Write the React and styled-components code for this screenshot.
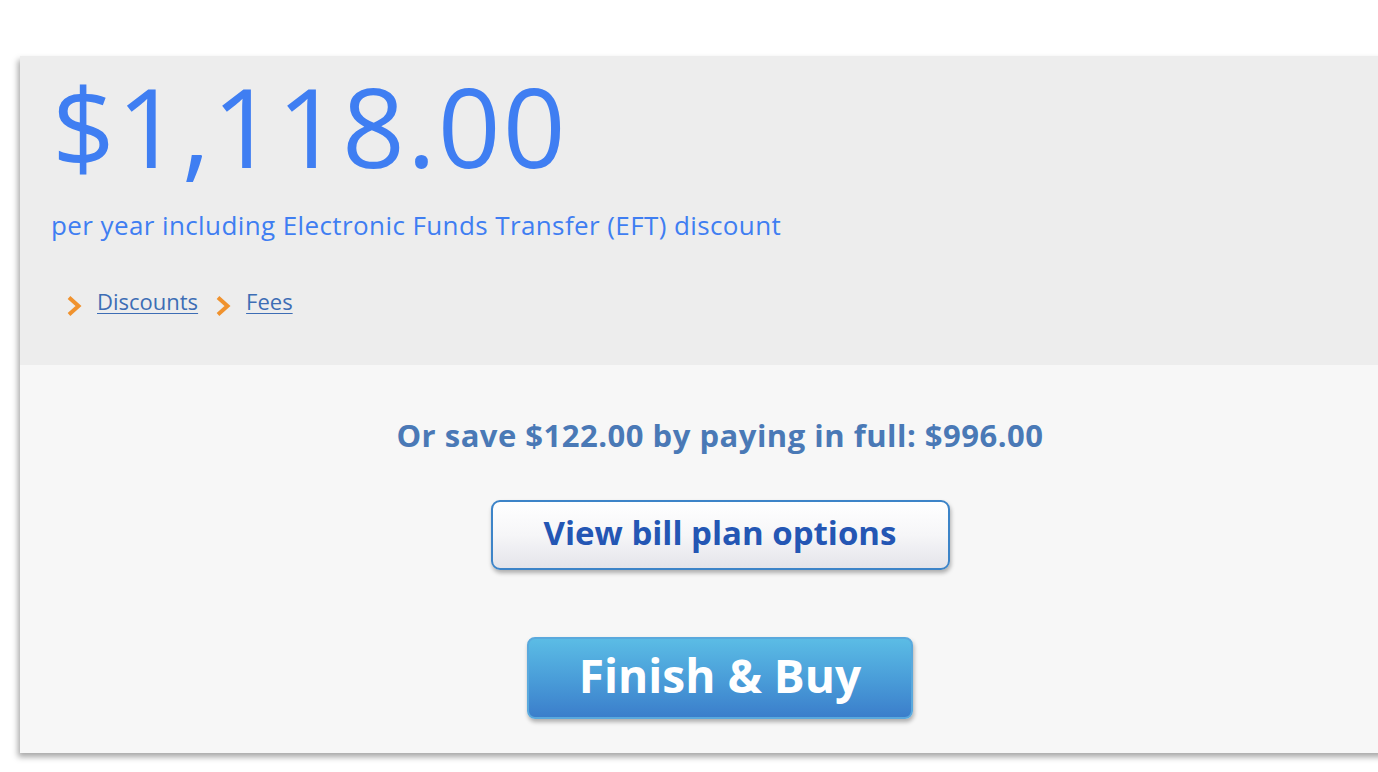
import React from 'react';
import styled, { createGlobalStyle } from 'styled-components';

const GlobalStyle = createGlobalStyle`
	body {
		margin: 0;
		background: #ffffff;
		font-family: "Open Sans", "Noto Sans", sans-serif;
		overflow: hidden;
	}
`;

const Page = styled.div`
	width: 1378px;
	height: 772px;
	padding: 56px 0 0 20px;
	box-sizing: border-box;
	overflow: hidden;
`;

const Card = styled.div`
	width: 1400px;
	box-shadow: -2px 4px 6px rgba(0, 0, 0, 0.35);
`;

const PriceArea = styled.div`
	background: #ededed;
	height: 309px;
	box-sizing: border-box;
	padding: 0 0 0 31px;
`;

const Price = styled.div`
	font-size: 110px;
	line-height: 1;
	color: #3f7ef2;
	letter-spacing: 2px;
	margin-left: 1px;
	padding-top: 14px;
`;

const PerYear = styled.div`
	font-size: 26px;
	letter-spacing: 0.4px;
	color: #3f7ef2;
	margin-top: 27px;
`;

const Links = styled.div`
	display: flex;
	align-items: center;
	gap: 18px;
	margin: 43px 0 0 16px;
`;

const LinkItem = styled.a`
	display: flex;
	align-items: center;
	gap: 15px;
	font-size: 22px;
	color: #3d6db5;
	text-decoration: underline;
	text-underline-offset: 3px;
	text-decoration-thickness: 1px;
`;

const Chevron = () => (
	<svg width="15" height="20" viewBox="0 0 15 20" style={{ marginTop: 10 }}>
		<path d="M2 1.5 L11.5 10 L2 18.5" fill="none" stroke="#f0922e" strokeWidth="4" />
	</svg>
);

const ActionArea = styled.div`
	background: #f7f7f7;
	height: 388px;
	display: flex;
	flex-direction: column;
	align-items: center;
	padding-top: 49px;
	box-sizing: border-box;
`;

const SaveLine = styled.div`
	font-size: 31px;
	letter-spacing: 0.5px;
	font-weight: 700;
	color: #4a79b6;
	line-height: 42px;
`;

const PlanButton = styled.button`
	margin-top: 44px;
	width: 459px;
	height: 70px;
	padding: 0 0 6px;
	border: 2px solid #3d84c8;
	border-radius: 9px;
	background: linear-gradient(#ffffff 0%, #f6f6f8 50%, #e4e4ea 100%);
	box-shadow: 1px 3px 4px rgba(0, 0, 0, 0.3);
	font-family: inherit;
	font-size: 33px;
	font-weight: 700;
	color: #2456b4;
	cursor: pointer;
`;

const BuyButton = styled.button`
	margin-top: 67px;
	width: 386px;
	height: 82px;
	padding: 0 0 6px;
	border: 2px solid #5aa9dd;
	border-radius: 8px;
	background: linear-gradient(#5bbce5 0%, #4a9ed9 50%, #3b7ecb 100%);
	box-shadow: 1px 3px 4px rgba(0, 0, 0, 0.3);
	font-family: inherit;
	font-size: 46px;
	font-weight: 700;
	color: #ffffff;
	cursor: pointer;
`;

const App = () => (
	<Page>
		<GlobalStyle />
		<Card>
			<PriceArea>
				<Price>$1,118.00</Price>
				<PerYear>per year including Electronic Funds Transfer (EFT) discount</PerYear>
				<Links>
					<LinkItem><Chevron />Discounts</LinkItem>
					<LinkItem><Chevron />Fees</LinkItem>
				</Links>
			</PriceArea>
			<ActionArea>
				<SaveLine>Or save $122.00 by paying in full: $996.00</SaveLine>
				<PlanButton>View bill plan options</PlanButton>
				<BuyButton>Finish &amp; Buy</BuyButton>
			</ActionArea>
		</Card>
	</Page>
);

export default App;
